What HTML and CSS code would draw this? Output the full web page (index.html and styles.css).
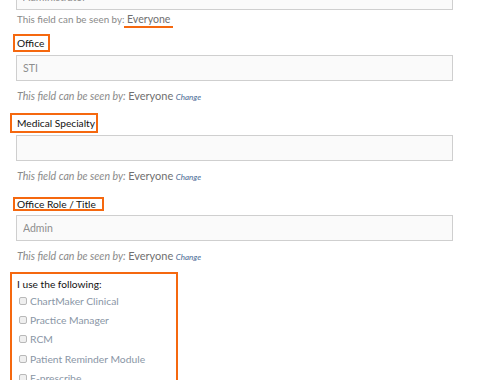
FILE: index.html
```html
<!DOCTYPE html>
<html lang="en">
<head>
    <meta charset="UTF-8">
    <title>Profile Fields</title>
    <link rel="stylesheet" href="styles.css">
</head>
<body>

    <div class="form">
        <!-- Title field (cut off at top) -->
        <div class="field field-first">
            <input type="text" class="text-input" value="Administrator" readonly>
            <p class="note-plain">This field can be seen by: <span class="marked">Everyone</span></p>
        </div>

        <div class="field">
            <label class="hl hl-office">Office</label>
            <input type="text" class="text-input" value="STI" readonly>
            <p class="note">This field can be seen by: <span class="who">Everyone</span> <a class="change">Change</a></p>
        </div>

        <div class="field">
            <label class="hl hl-medical">Medical Specialty</label>
            <input type="text" class="text-input" value="" readonly>
            <p class="note">This field can be seen by: <span class="who">Everyone</span> <a class="change">Change</a></p>
        </div>

        <div class="field">
            <label class="hl hl-role">Office Role / Title</label>
            <input type="text" class="text-input" value="Admin" readonly>
            <p class="note">This field can be seen by: <span class="who">Everyone</span> <a class="change">Change</a></p>
        </div>

        <!-- Software checklist -->
        <div class="checklist">
            <div class="checklist-title">I use the following:</div>
            <label class="check"><span class="box"></span>ChartMaker Clinical</label>
            <label class="check"><span class="box"></span>Practice Manager</label>
            <label class="check"><span class="box"></span>RCM</label>
            <label class="check"><span class="box"></span>Patient Reminder Module</label>
            <label class="check"><span class="box"></span>E-prescribe</label>
        </div>
    </div>

</body>
</html>
```

FILE: styles.css
```css
body {
    font-family: Lato, "Open Sans", sans-serif;
    background-color: #fff;
    color: #222;
    margin: 0;
    overflow: hidden;
}

.form {
    padding-left: 16px;
    width: 437px;
}

.field {
    margin: 0;
}

.field-first {
    margin-top: -16px;
}

.text-input {
    display: block;
    box-sizing: border-box;
    width: 437px;
    height: 26px;
    margin: 0;
    padding: 0 6px;
    border: 1px solid #cfcfcf;
    background-color: #fafafa;
    font-family: inherit;
    font-size: 10.5px;
    color: #8e8e8e;
    outline: none;
}

/* orange highlight boxes round labels */
.hl {
    display: block;
    width: fit-content;
    font-size: 10.2px;
    line-height: 14px;
    color: #111;
    border: 2px solid #f5680f;
}

.hl-office {
    margin: 5px 0 3px -3px;
    padding: 0 4px 0 2px;
}

.hl-medical {
    margin: 9px 0 2px -6px;
    padding: 1px 1px 1px 5px;
}

.hl-role {
    margin: 13px 0 4px -3px;
    padding: 0 6px 0 2px;
    line-height: 10px;
}

.note-plain {
    height: 16px;
    margin: 3px 0 0 1px;
    font-size: 9.8px;
    line-height: 12px;
    color: #8a8a8a;
}

.marked {
    display: inline-block;
    font-size: 10.6px;
    line-height: 12px;
    color: #6f6f6f;
    padding: 0 3px 1px 3px;
    margin-left: -3px;
    border-bottom: 2px solid #f5680f;
}

.note {
    margin: 8px 0 0 1px;
    font-size: 10.6px;
    line-height: 14px;
    font-style: italic;
    color: #8a8a8a;
}

.who {
    font-style: normal;
    font-size: 11px;
    color: #6f6f6f;
}

.change {
    font-size: 8px;
    color: #4a6a95;
}

.checklist {
    box-sizing: border-box;
    width: 168px;
    height: 130px;
    margin: 8px 0 0 -6px;
    padding: 3px 0 0 5px;
    border: 2px solid #f5680f;
    border-bottom: none;
}

.checklist-title {
    font-size: 10.2px;
    line-height: 14px;
    color: #111;
    margin-bottom: 0;
}

.check {
    display: flex;
    align-items: center;
    height: 19.3px;
    font-size: 10.3px;
    color: #8a96a6;
}

.box {
    display: inline-block;
    box-sizing: border-box;
    width: 8px;
    height: 8px;
    margin: 0 3px 0 2px;
    border: 1px solid #b9b9b9;
    border-radius: 2px;
    background-color: #efefef;
}
```
